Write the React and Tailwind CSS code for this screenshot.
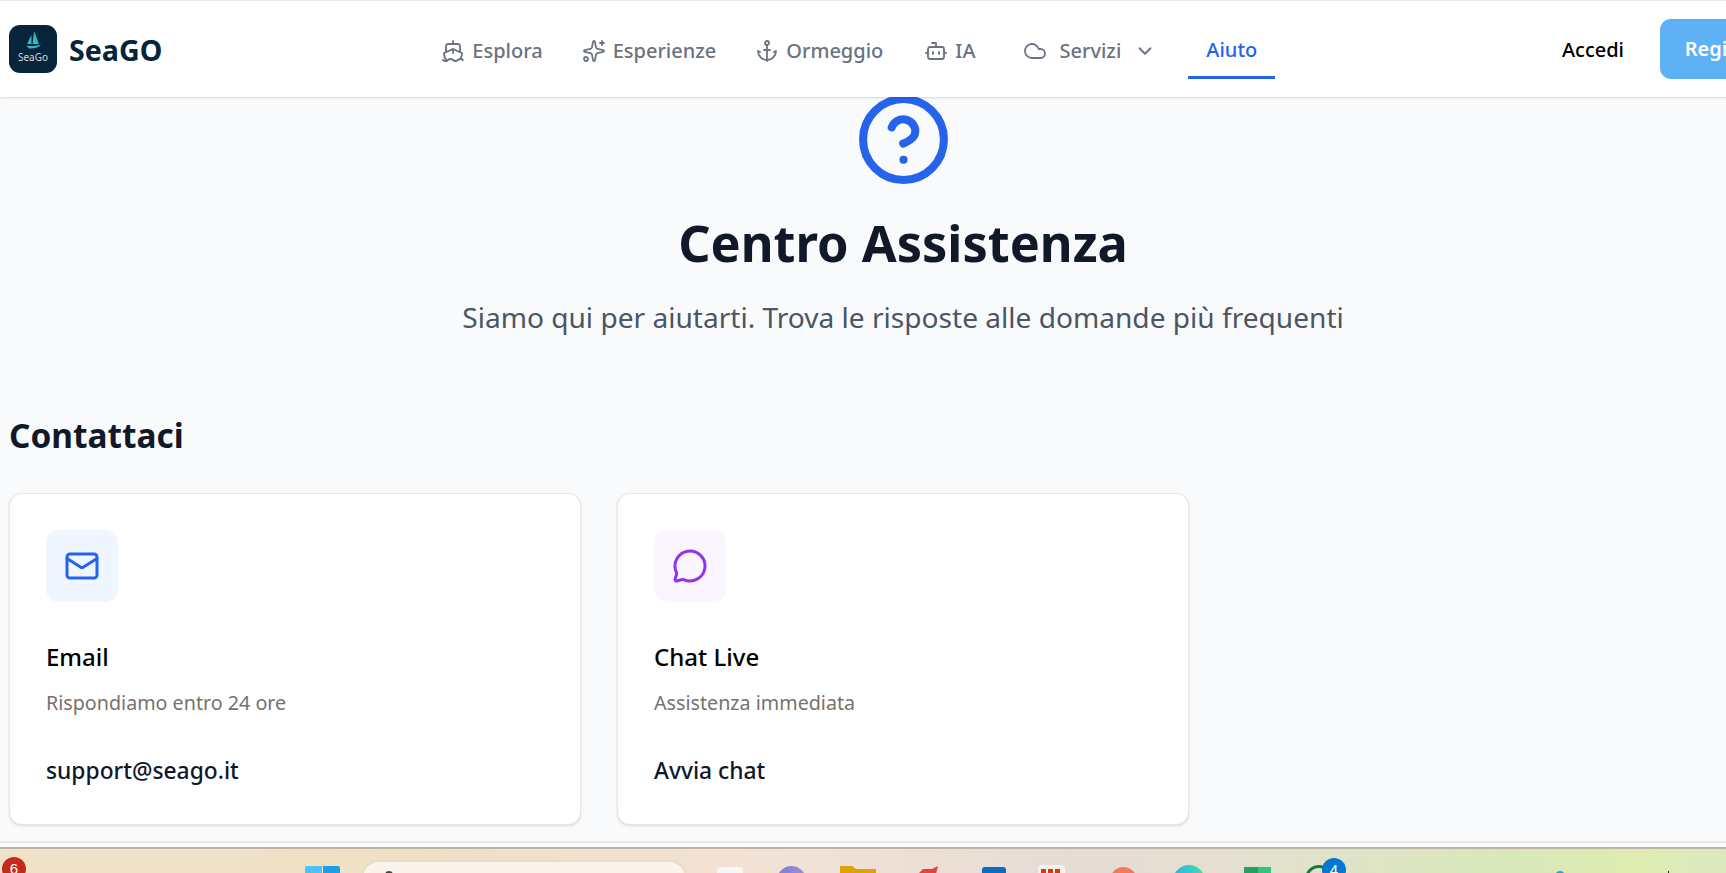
import React from 'react';
import { Ship, Sparkles, Anchor, Bot, Cloud, ChevronDown, CircleHelp, Mail, MessageCircle } from 'lucide-react';

const NavItem = ({ icon: Icon, label, className = '' }) => (
  <a className={`flex items-center gap-[7px] text-[20px] font-medium text-[#6b7280] ${className}`}>
    <Icon className="w-[24px] h-[24px]" strokeWidth={1.8} />
    {label}
  </a>
);

const ContactCard = ({ icon: Icon, iconBg, iconColor, title, subtitle, action }) => (
  <div className="bg-white border border-[#e5e7eb] rounded-[13px] shadow-sm p-[36px] pb-[35px]">
    <div className={`w-[72px] h-[72px] rounded-[13px] flex items-center justify-center ${iconBg}`}>
      <Icon className={`w-[36px] h-[36px] ${iconColor}`} strokeWidth={2} />
    </div>
    <h3 className="mt-[37px] text-[24px] leading-[36px] font-medium text-black">{title}</h3>
    <p className="mt-[10px] text-[19.7px] leading-[36px] text-[#78716c]">{subtitle}</p>
    <p className="mt-[32px] text-[22.8px] leading-[36px] font-medium text-[#0f172a]">{action}</p>
  </div>
);

// taskbar pieces, cut off by the bottom of the screen
const Taskbar = () => (
  <div className="h-[24px] shrink-0 overflow-hidden flex items-start bg-[linear-gradient(90deg,#f0e2c8_0%,#efe0c6_25%,#f3e2d6_45%,#e6dcd5_62%,#e4e0d0_72%,#d8e8b8_88%,#dfecb0_95%,#dde8c0_100%)]">
    <div className="ml-[2px] mt-[8px] w-[24px] h-[24px] shrink-0 rounded-full bg-[#c42b1c] text-white text-[15px] leading-[24px] text-center font-['Liberation_Sans',sans-serif]">6</div>
    <div className="ml-[279px] mt-[17px] w-[35px] grid grid-cols-2 gap-[1px] shrink-0">
      <div className="h-[17px] rounded-tl-[2px] bg-[#4cc2ff]"></div>
      <div className="h-[17px] rounded-tr-[2px] bg-[#1a9fe8]"></div>
    </div>
    <div className="ml-[21px] mt-[11px] w-[326px] h-[36px] shrink-0 rounded-[18px] bg-[#faf4ec] border-2 border-[#e8dccb] pl-[22px] pt-[9px]">
      <div className="w-[8px] h-[8px] rounded-full border-2 border-[#444]"></div>
    </div>
    <div className="ml-[30px] mt-[18px] w-[26px] h-[26px] shrink-0 rounded-[3px] bg-[#f6f6f6]"></div>
    <div className="ml-[34px] mt-[17px] w-[29px] h-[29px] shrink-0 rounded-full bg-gradient-to-r from-[#7b7fd8] to-[#a08cd0]"></div>
    <svg viewBox="0 0 36 7" className="ml-[34px] mt-[17px] w-[36px] h-[7px] shrink-0">
      <path d="M0 7 L0 1 Q0 0 1 0 L12 0 L16 3 L36 3 L36 7 Z" fill="#e0a000" />
    </svg>
    <svg viewBox="0 0 20 8" className="ml-[42px] mt-[17px] w-[20px] h-[8px] shrink-0">
      <path d="M0 8 L5 3 L14 3 L20 0 L18 8 Z" fill="#e8413c" />
    </svg>
    <div className="ml-[44px] mt-[18px] w-[24px] h-[20px] shrink-0 rounded-t-[3px] bg-[#0a6cbd]"></div>
    <div className="ml-[32px] mt-[16px] w-[27px] h-[24px] shrink-0 rounded-t-[4px] bg-[#f4f1f1] flex gap-[2px] pl-[3px] pt-[4px]">
      <div className="w-[5px] h-[5px] bg-[#d83b01]"></div>
      <div className="w-[5px] h-[5px] bg-[#d83b01]"></div>
      <div className="w-[5px] h-[5px] bg-[#d83b01]"></div>
    </div>
    <div className="ml-[45px] mt-[18px] w-[27px] h-[27px] shrink-0 rounded-full bg-[#f4795b]"></div>
    <div className="ml-[36px] mt-[16px] w-[32px] h-[32px] shrink-0 rounded-full bg-gradient-to-r from-[#27b4e8] to-[#4fdb9a]"></div>
    <div className="ml-[39px] mt-[18px] w-[27px] h-[20px] shrink-0 flex">
      <div className="flex-1 bg-[#21a366]"></div>
      <div className="flex-1 bg-[#33c481]"></div>
    </div>
    <div className="ml-[34px] mt-[16px] w-[41px] shrink-0 relative">
      <div className="w-[28px] h-[28px] rounded-full border-[3px] border-[#107c41]"></div>
      <div className="absolute left-[17px] -top-[7px] w-[24px] h-[24px] rounded-full bg-[#0078d4] text-white text-[15px] leading-[24px] text-center font-['Liberation_Sans',sans-serif]">4</div>
    </div>
    <div className="ml-[209px] mt-[22px] w-[10px] h-[10px] shrink-0 rounded-full bg-[#2a9fe0]"></div>
    <div className="ml-[103px] mt-[22px] w-[1px] h-[4px] shrink-0 bg-[#222]"></div>
  </div>
);

export default function App() {
  return (
    <div className="h-screen w-full overflow-hidden bg-[#f9fafb] flex flex-col font-['Noto_Sans',sans-serif]">
      <div className="w-[1806px] flex-1 min-h-0">
        <header className="h-[97px] w-[1813px] bg-white border-t border-[#e5e7eb] shadow-sm flex items-center pl-[9px] pr-[9px] relative z-10">
          <div className="w-[48px] h-[48px] shrink-0 rounded-[11px] bg-[#06243a] flex flex-col items-center pt-[6px]">
            <svg viewBox="0 0 20 20" className="w-[20px] h-[20px]">
              <path d="M11 0 L16 13 L9.5 13 Z" fill="#2fb8c6" />
              <path d="M8.5 4 L8.5 13 L4 13 Z" fill="#2fb8c6" />
              <path d="M3 14.5 Q10 16 18 13.5 Q15 18 6 17.5 Z" fill="#2fb8c6" />
            </svg>
            <span className="text-[10px] leading-[12px] text-[#cfd8dc]">SeaGo</span>
          </div>
          <span className="ml-[12px] text-[28.6px] font-bold text-[#06243a] translate-y-[1px]">SeaGO</span>
          <nav className="ml-[279px] flex items-center gap-[39px] translate-y-[2px]">
            <NavItem icon={Ship} label="Esplora" />
            <NavItem icon={Sparkles} label="Esperienze" />
            <NavItem icon={Anchor} label="Ormeggio" />
            <NavItem icon={Bot} label="IA" className="ml-[2px]" />
            <a className="ml-[9px] flex items-center text-[20px] font-medium text-[#6b7280]">
              <Cloud className="w-[24px] h-[24px]" strokeWidth={1.8} />
              <span className="ml-[12px]">Servizi</span>
              <ChevronDown className="ml-[13px] w-[22px] h-[22px]" strokeWidth={2} />
            </a>
            <a className="-ml-[7px] h-[55px] w-[87px] flex items-center justify-center border-b-[3px] border-[#2563eb] text-[20px] font-medium text-[#2563eb]">Aiuto</a>
          </nav>
          <a className="ml-auto text-[20px] font-medium text-black translate-y-[1px]">Accedi</a>
          <button className="ml-[36px] h-[60px] w-[144px] rounded-[11px] bg-[#5eb1f5] text-white text-[20px] font-semibold">Registrati</button>
        </header>
        <main className="px-[9px]">
          <div className="flex flex-col items-center">
            <CircleHelp className="w-[97px] h-[97px] text-[#2563eb] -mt-[6px]" strokeWidth={2} />
            <h1 className="mt-[19px] text-[50.5px] leading-[72px] font-bold text-[#111827]">Centro Assistenza</h1>
            <p className="mt-[18px] text-[28.1px] leading-[40px] text-[#4b5563]">Siamo qui per aiutarti. Trova le risposte alle domande più frequenti</p>
          </div>
          <h2 className="mt-[74px] text-[33.4px] leading-[48px] font-bold text-[#111827]">Contattaci</h2>
          <div className="mt-[34px] grid grid-cols-3 gap-[36px]">
            <ContactCard icon={Mail} iconBg="bg-[#eff6ff]" iconColor="text-[#2563eb]" title="Email" subtitle="Rispondiamo entro 24 ore" action="support@seago.it" />
            <ContactCard icon={MessageCircle} iconBg="bg-[#faf5ff]" iconColor="text-[#9333ea]" title="Chat Live" subtitle="Assistenza immediata" action="Avvia chat" />
          </div>
        </main>
      </div>
      <div className="h-[6px] shrink-0 border-t-2 border-[#e6e8ec] bg-[#fbfbfc]"></div>
      <div className="h-[2px] shrink-0 bg-[#bcb5a8]"></div>
      <Taskbar />
    </div>
  );
}
